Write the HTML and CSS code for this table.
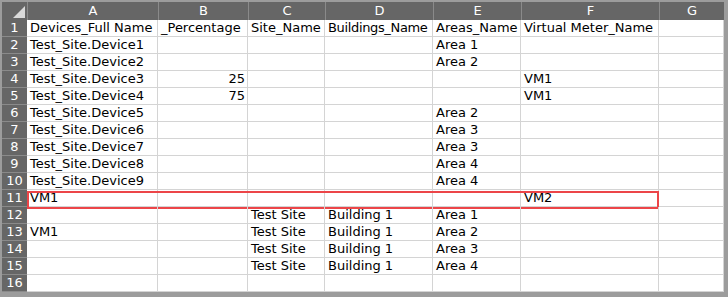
FILE: index.html
```html
<!DOCTYPE html>
<html>
<head>
<meta charset="utf-8">
<link rel="stylesheet" href="styles.css">
</head>
<body>
<div class="frame">
  <div class="sheet">
    <div class="row head">
      <div class="corner"><span class="tri"></span></div>
      <div class="ch">A</div><div class="ch">B</div><div class="ch">C</div><div class="ch">D</div><div class="ch">E</div><div class="ch">F</div><div class="ch">G</div>
    </div>
    <div class="row"><div class="rh">1</div><div class="c">Devices_Full Name</div><div class="c">_Percentage</div><div class="c">Site_Name</div><div class="c tight">Buildings_Name</div><div class="c">Areas_Name</div><div class="c">Virtual Meter_Name</div><div class="c"></div></div>
    <div class="row"><div class="rh">2</div><div class="c">Test_Site.Device1</div><div class="c"></div><div class="c"></div><div class="c"></div><div class="c">Area 1</div><div class="c"></div><div class="c"></div></div>
    <div class="row"><div class="rh">3</div><div class="c">Test_Site.Device2</div><div class="c"></div><div class="c"></div><div class="c"></div><div class="c">Area 2</div><div class="c"></div><div class="c"></div></div>
    <div class="row"><div class="rh">4</div><div class="c">Test_Site.Device3</div><div class="c num">25</div><div class="c"></div><div class="c"></div><div class="c"></div><div class="c">VM1</div><div class="c"></div></div>
    <div class="row"><div class="rh">5</div><div class="c">Test_Site.Device4</div><div class="c num">75</div><div class="c"></div><div class="c"></div><div class="c"></div><div class="c">VM1</div><div class="c"></div></div>
    <div class="row"><div class="rh">6</div><div class="c">Test_Site.Device5</div><div class="c"></div><div class="c"></div><div class="c"></div><div class="c">Area 2</div><div class="c"></div><div class="c"></div></div>
    <div class="row"><div class="rh">7</div><div class="c">Test_Site.Device6</div><div class="c"></div><div class="c"></div><div class="c"></div><div class="c">Area 3</div><div class="c"></div><div class="c"></div></div>
    <div class="row"><div class="rh">8</div><div class="c">Test_Site.Device7</div><div class="c"></div><div class="c"></div><div class="c"></div><div class="c">Area 3</div><div class="c"></div><div class="c"></div></div>
    <div class="row"><div class="rh">9</div><div class="c">Test_Site.Device8</div><div class="c"></div><div class="c"></div><div class="c"></div><div class="c">Area 4</div><div class="c"></div><div class="c"></div></div>
    <div class="row"><div class="rh">10</div><div class="c">Test_Site.Device9</div><div class="c"></div><div class="c"></div><div class="c"></div><div class="c">Area 4</div><div class="c"></div><div class="c"></div></div>
    <div class="row marked"><div class="rh">11</div><div class="c">VM1</div><div class="c"></div><div class="c"></div><div class="c"></div><div class="c"></div><div class="c">VM2</div><div class="c"></div></div>
    <div class="row"><div class="rh">12</div><div class="c"></div><div class="c"></div><div class="c">Test Site</div><div class="c">Building 1</div><div class="c">Area 1</div><div class="c"></div><div class="c"></div></div>
    <div class="row"><div class="rh">13</div><div class="c">VM1</div><div class="c"></div><div class="c">Test Site</div><div class="c">Building 1</div><div class="c">Area 2</div><div class="c"></div><div class="c"></div></div>
    <div class="row"><div class="rh">14</div><div class="c"></div><div class="c"></div><div class="c">Test Site</div><div class="c">Building 1</div><div class="c">Area 3</div><div class="c"></div><div class="c"></div></div>
    <div class="row"><div class="rh">15</div><div class="c"></div><div class="c"></div><div class="c">Test Site</div><div class="c">Building 1</div><div class="c">Area 4</div><div class="c"></div><div class="c"></div></div>
    <div class="row"><div class="rh">16</div><div class="c"></div><div class="c"></div><div class="c"></div><div class="c"></div><div class="c"></div><div class="c"></div><div class="c"></div></div>
  </div>
</div>
</body>
</html>
```

FILE: styles.css
```css
html, body {
  margin: 0;
  padding: 0;
  background: #ffffff;
}
.frame {
  width: 728px;
  height: 297px;
  box-sizing: border-box;
  background: #9c9c9c;
  padding: 2px 4px 5px 2px;
}
.sheet {
  background: #ffffff;
  height: 290px;
  overflow: hidden;
  font-family: "DejaVu Sans", Verdana, sans-serif;
  font-size: 13px;
  color: #000;
}
.row {
  display: grid;
  grid-template-columns: 25px 131px 90px 77px 108px 88px 138px 65px;
  height: 17px;
  position: relative;
}
.row.head {
  height: 18px;
  background: #666666;
}
.c {
  box-sizing: border-box;
  border-right: 1px solid #d4d4d4;
  border-bottom: 1px solid #d4d4d4;
  padding: 0 2px 0 3px;
  line-height: 16px;
  white-space: nowrap;
  overflow: hidden;
}
.c.tight {
  letter-spacing: -0.35px;
}
.c.num {
  text-align: right;
}
.rh {
  box-sizing: border-box;
  background: #666666;
  color: #ffffff;
  border-bottom: 1px solid #8a8a8a;
  text-align: center;
  line-height: 16px;
}
.ch {
  box-sizing: border-box;
  color: #ffffff;
  border-left: 1px solid #8a8a8a;
  text-align: center;
  line-height: 18px;
}
.corner {
  position: relative;
}
.tri {
  position: absolute;
  right: 2px;
  bottom: 2px;
  width: 0;
  height: 0;
  border-left: 12px solid transparent;
  border-bottom: 12px solid #d9d9d9;
}
.row.marked::after {
  content: "";
  position: absolute;
  left: 25px;
  top: 1px;
  width: 632px;
  height: 18px;
  box-sizing: border-box;
  border: 2px solid #ec4548;
  pointer-events: none;
}
```
